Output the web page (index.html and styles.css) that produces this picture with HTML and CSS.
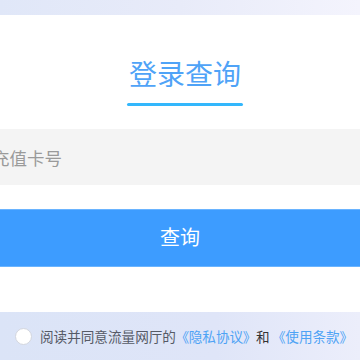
FILE: index.html
```html
<!DOCTYPE html>
<html lang="zh-CN">
<head>
<meta charset="utf-8">
<title>登录查询</title>
<link rel="stylesheet" href="styles.css">
</head>
<body>
<div class="top-band"></div>
<main class="card">
  <div class="title-wrap">
    <h1 class="title">登录查询</h1>
    <div class="title-line"></div>
  </div>
  <div class="field"><span class="placeholder">充值卡号</span></div>
  <button class="btn" type="button">查询</button>
</main>
<footer class="agree">
  <span class="radio"></span>
  <span class="agree-text">阅读并同意流量网厅的</span>
  <a class="link link-first">《隐私协议》</a>
  <span class="and">和</span>
  <a class="link">《使用条款》</a>
</footer>
</body>
</html>
```
FILE: styles.css
```css
html, body {
  margin: 0;
  padding: 0;
  width: 360px;
  height: 360px;
  overflow: hidden;
  background: #ffffff;
  font-family: "Noto Sans CJK SC", "Noto Sans", sans-serif;
}

.top-band {
  height: 15px;
  background: linear-gradient(90deg, #e0e7f8 0%, #e8ebf9 50%, #f4f4fd 100%);
}

.card {
  display: flex;
  flex-direction: column;
  height: 297px;
}

.title-wrap {
  display: flex;
  flex-direction: column;
  align-items: center;
  padding-top: 38px;
  padding-left: 10px;
}

.title {
  margin: 0;
  font-size: 28px;
  line-height: 40px;
  font-weight: 400;
  color: #4fa3f7;
}

.title-line {
  margin-top: 10px;
  width: 116px;
  height: 3px;
  background: #33b7fc;
  border-radius: 2px;
}

.field {
  margin-top: 23px;
  height: 56px;
  background: #f4f4f4;
  display: flex;
  align-items: center;
}

.placeholder {
  margin-left: -8px;
  font-size: 17.5px;
  color: #9a9a9a;
  white-space: nowrap;
}

.btn {
  margin-top: 24px;
  height: 58px;
  width: 100%;
  border: none;
  border-top: 1px solid #6ab4ff;
  border-bottom: 1px solid #6ab4ff;
  background: #3d9cff;
  color: #ffffff;
  font-family: inherit;
  font-size: 20px;
  padding: 0 0 4px 0;
}

.agree {
  height: 48px;
  background: linear-gradient(90deg, #dbe4f7 0%, #dfe5f8 60%, #eceefb 100%);
  display: flex;
  align-items: center;
  padding-left: 15px;
  font-size: 13.6px;
  white-space: nowrap;
}

.agree > * {
  flex: none;
}

.radio {
  width: 15px;
  height: 15px;
  border-radius: 50%;
  background: #ffffff;
  border: 1px solid #d3d6de;
  margin-right: 8px;
}

.agree-text {
  color: #555a66;
}

.link {
  color: #4ea3f5;
  text-decoration: none;
  font-feature-settings: "palt" 1;
}

.link-first {
  margin-left: 6px;
}

.and {
  color: #333333;
  margin: 0 9px 0 6px;
}
```
